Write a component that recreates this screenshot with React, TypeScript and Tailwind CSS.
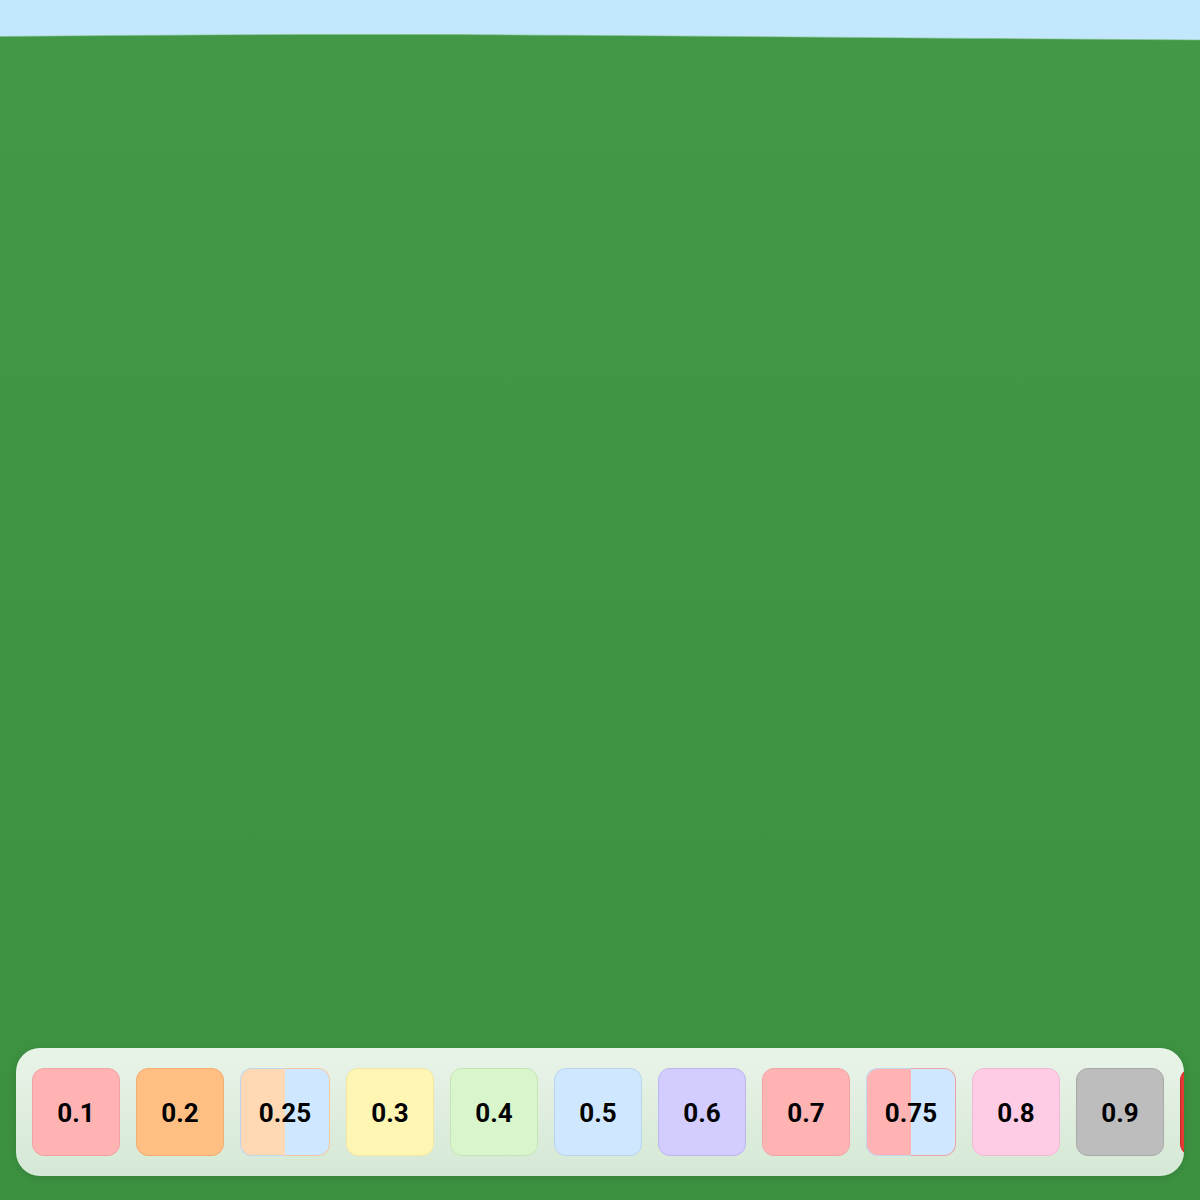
import React from "react";

type Swatch = {
  label: string;
  fill: string;
  border: string;
  split?: { left: string; right: string; rightBorder: string };
};

// Weight palette: plain tiles carry a fill and border, split tiles carry two halves.
const swatches: Swatch[] = [
  { label: "0.1", fill: "bg-[#ffb3b3]", border: "border-[#f0a3a6]" },
  { label: "0.2", fill: "bg-[#ffbf82]", border: "border-[#f2ad72]" },
  {
    label: "0.25",
    fill: "",
    border: "",
    split: { left: "bg-[#ffd9b3]", right: "bg-[#d0e8ff]", rightBorder: "border-[#f3c9a3]" },
  },
  { label: "0.3", fill: "bg-[#fff6b3]", border: "border-[#f3e6a0]" },
  { label: "0.4", fill: "bg-[#d9f5cb]", border: "border-[#c4e5b4]" },
  { label: "0.5", fill: "bg-[#d0e8ff]", border: "border-[#b8d4ef]" },
  { label: "0.6", fill: "bg-[#d2ccff]", border: "border-[#bdb5f0]" },
  { label: "0.7", fill: "bg-[#ffb3b3]", border: "border-[#f0a3a6]" },
  {
    label: "0.75",
    fill: "",
    border: "",
    split: { left: "bg-[#ffb3b3]", right: "bg-[#d0e8ff]", rightBorder: "border-[#f0a3a6]" },
  },
  { label: "0.8", fill: "bg-[#ffcce6]", border: "border-[#f4b8d6]" },
  { label: "0.9", fill: "bg-[#bdbdbd]", border: "border-[#a9a9a9]" },
  { label: "", fill: "bg-[#e53935]", border: "border-[#c62828]" },
];

function Tile({ s }: { s: Swatch }) {
  if (s.split) {
    return (
      <div className="relative flex h-[88px] w-[90px] flex-none">
        <div className={`w-1/2 rounded-l-xl border border-r-0 border-[#c3d4ee] ${s.split.left}`} />
        <div className={`w-1/2 rounded-r-xl border border-l-0 ${s.split.right} ${s.split.rightBorder}`} />
        <span className="absolute inset-0 flex items-center justify-center pt-[2px] text-[26px] font-bold text-black">
          {s.label}
        </span>
      </div>
    );
  }
  return (
    <div
      className={`flex h-[88px] w-[88px] flex-none items-center justify-center rounded-xl border pt-[2px] text-[26px] font-bold text-black ${s.fill} ${s.border}`}
    >
      {s.label}
    </div>
  );
}

export default function App() {
  return (
    <div
      className="relative h-[1200px] w-full overflow-hidden bg-[#c3e8fe]"
      style={{ fontFamily: "Roboto, 'Liberation Sans', sans-serif" }}
    >
      {/* ground plane with a slightly tilted horizon */}
      <svg className="absolute inset-0" width="1200" height="1200" viewBox="0 0 1200 1200">
        <defs>
          <linearGradient id="ground" x1="0" y1="0" x2="0" y2="1">
            <stop offset="0" stopColor="#429846" />
            <stop offset="1" stopColor="#3c9140" />
          </linearGradient>
        </defs>
        <path
          d="M0 36.5 C 150 35 300 34 450 34.6 S 800 37 1000 38.6 L 1200 40 L 1200 1200 L 0 1200 Z"
          fill="url(#ground)"
        />
        <path
          d="M0 36.5 C 150 35 300 34 450 34.6 S 800 37 1000 38.6 L 1200 40"
          fill="none"
          stroke="#7fbf80"
          strokeWidth="0.8"
          opacity="0.7"
        />
      </svg>

      <div className="absolute bottom-6 left-4 right-4 overflow-hidden rounded-3xl bg-gradient-to-b from-[#e9f4e9] to-[#d5e8d5] shadow-[0_2px_8px_rgba(0,0,0,0.12)]">
        <div className="flex gap-4 px-4 py-5">
          {swatches.map((s, i) => (
            <Tile key={i} s={s} />
          ))}
        </div>
      </div>
    </div>
  );
}
